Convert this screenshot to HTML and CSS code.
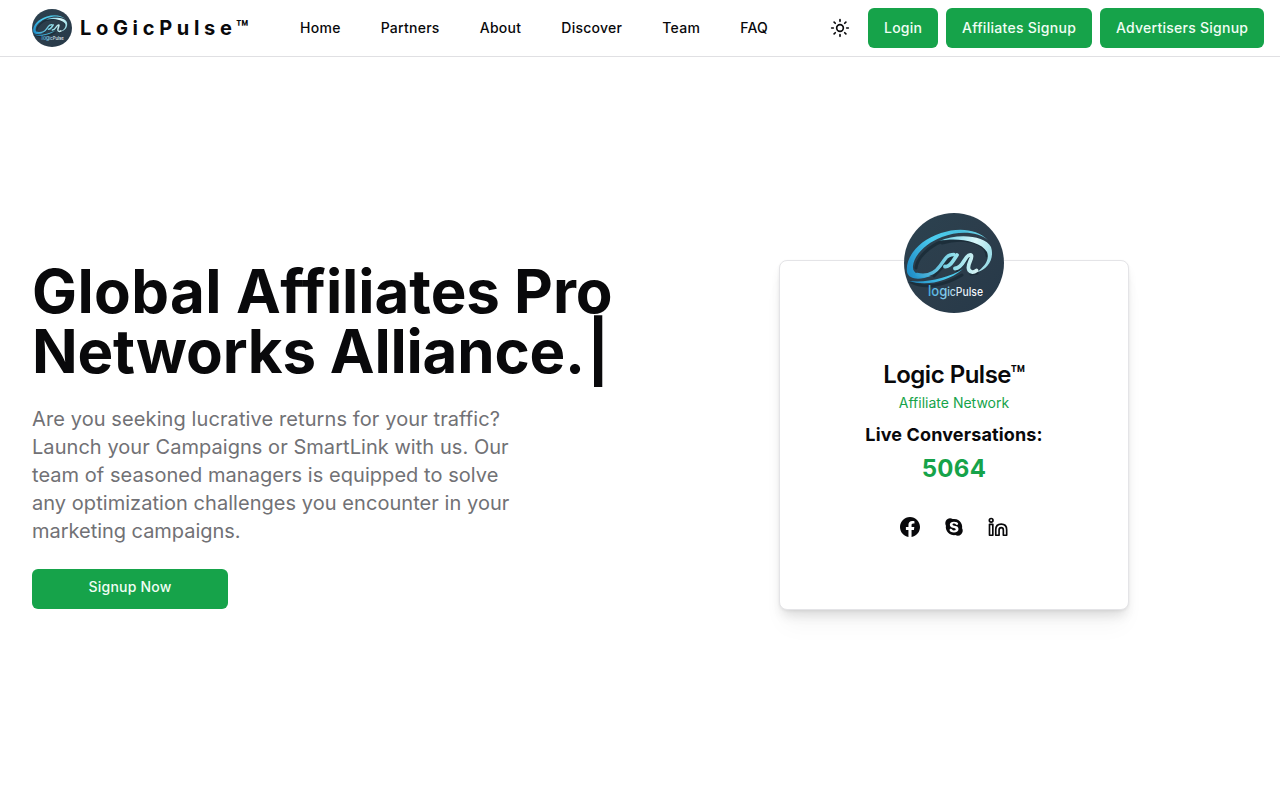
FILE: index.html
```html
<!DOCTYPE html>
<html lang="en">
<head>
<meta charset="utf-8">
<title>LoGicPulse</title>
<link rel="stylesheet" href="styles.css">
</head>
<body>
<svg class="defs" aria-hidden="true">
  <defs>
    <linearGradient id="disc" x1="0" y1="0" x2="1" y2="1"><stop offset="0" stop-color="#2b4250"/><stop offset=".5" stop-color="#2c3d4b"/><stop offset="1" stop-color="#263949"/></linearGradient>
    <linearGradient id="ring" gradientUnits="userSpaceOnUse" x1="5" y1="60" x2="85" y2="25"><stop offset="0" stop-color="#218fc8"/><stop offset=".4" stop-color="#4ccdf0"/><stop offset=".75" stop-color="#49bddc"/><stop offset="1" stop-color="#79dcec"/></linearGradient>
    <linearGradient id="arc" gradientUnits="userSpaceOnUse" x1="35" y1="30" x2="88" y2="55"><stop offset="0" stop-color="#69cfe7"/><stop offset=".55" stop-color="#d9f7fa"/><stop offset="1" stop-color="#8bd6e2"/></linearGradient>
    <linearGradient id="wave" gradientUnits="userSpaceOnUse" x1="12" y1="50" x2="72" y2="50"><stop offset="0" stop-color="#2d9ccf"/><stop offset=".6" stop-color="#8bddea"/><stop offset="1" stop-color="#d3f2f3"/></linearGradient>
    <linearGradient id="word" x1="0" x2="1"><stop offset="0" stop-color="#45aee0"/><stop offset=".36" stop-color="#8bd0ec"/><stop offset=".55" stop-color="#e4edf2"/><stop offset="1" stop-color="#fff"/></linearGradient>
  </defs>
  <symbol id="emblem" viewBox="0 0 100 100" preserveAspectRatio="none">
    <circle cx="50" cy="50" r="50" fill="url(#disc)"/>
    <g fill="none" stroke="#10212b" stroke-linecap="round" stroke-width="3" opacity=".55">
      <path d="M12 55C13 45 25 33 39 28M38 30C58 24 82 28 83 43M7 69C20 76 40 73 58 62M30 63L48 44M53 58L65 44M67 61L73 60"/>
    </g>
    <path fill="url(#ring)" d="M84 27C73 16 55 14 37 20C15 27 1 44 3 59C5 67 16 67 27 63C17 63 8 61 9 53C10 42 22 30 38 24C54 18 73 18 84 27Z"/>
    <path fill="url(#ring)" d="M5 68C21 73 42 70 59 56C44 65 23 70 5 68Z"/>
    <path fill="url(#arc)" d="M35 28C53 20 81 22 87 34C91 46 83 57 73 59C80 54 86 47 83 39C77 28 52 24 35 28Z"/>
    <g fill="none" stroke="url(#wave)" stroke-width="3.8" stroke-linecap="round" stroke-linejoin="round">
      <path stroke-width="3.4" d="M13 61.5C24 64 31 60 36 53L41 46Q44 41.5 50 41.5"/>
      <path d="M41 53.5Q45 54 49 48L53 42"/>
      <path d="M51 55.5Q56 55 60 48Q64 41 67 42C70 44 62 52 65 57Q68 61 72.5 57.5"/>
    </g>
    <text x="24" y="82.5" class="emblem-text" fill="url(#word)" textLength="55" lengthAdjust="spacingAndGlyphs"><tspan font-size="14.5">log</tspan><tspan font-size="11.5">icPulse</tspan></text>
  </symbol>
</svg>

<header class="topbar">
  <a class="brand"><svg class="brand-logo"><use href="#emblem"/></svg><span class="brand-name">LoGicPulse™</span></a>
  <nav class="nav"><a>Home</a><a>Partners</a><a>About</a><a>Discover</a><a>Team</a><a>FAQ</a></nav>
  <div class="actions">
    <svg class="sun" viewBox="0 0 24 24"><circle cx="12" cy="12" r="4"/><path d="M12 2v2M12 20v2M4.93 4.93l1.41 1.41M17.66 17.66l1.41 1.41M2 12h2M20 12h2M6.34 17.66l-1.41 1.41M19.07 4.93l-1.41 1.41"/></svg>
    <a class="btn login">Login</a><a class="btn affiliates">Affiliates Signup</a><a class="btn advertisers">Advertisers Signup</a>
  </div>
</header>

<main class="hero">
  <section class="intro">
    <h1><span class="line-one"><span class="first">Global</span> Affiliates Pro</span><br><span class="line-two">Networks Alliance.</span><span class="caret">|</span></h1>
    <p><span class="lead">Are you seeking lucrative returns for your traffic?</span><br>Launch your Campaigns or SmartLink with us. Our<br>team of seasoned managers is equipped to solve<br>any optimization challenges you encounter in your<br><span class="last">marketing campaigns.</span></p>
    <a class="btn signup">Signup Now</a>
  </section>
  <section class="showcase">
    <article class="card">
      <svg class="avatar"><use href="#emblem"/></svg>
      <h2>Logic Pulse™</h2>
      <div class="role">Affiliate Network</div>
      <div class="live">Live Conversations:</div>
      <div class="count">5064</div>
      <div class="social">
        <svg viewBox="0 0 24 24"><path d="M24 12.073C24 5.405 18.627 0 12 0S0 5.405 0 12.073C0 18.1 4.388 23.094 10.125 24v-8.437H7.078v-3.49h3.047v-2.66c0-3.025 1.792-4.697 4.533-4.697 1.312 0 2.686.236 2.686.236v2.971H15.83c-1.491 0-1.956.93-1.956 1.886v2.264h3.328l-.532 3.49h-2.796V24C19.612 23.094 24 18.1 24 12.073z"/></svg>
        <svg viewBox="0 0 24 24"><path fill-rule="evenodd" d="M7.2 1.5A6 6 0 0 1 10.4 2.4A9.8 9.8 0 0 1 21.7 13.6A6 6 0 0 1 13.6 21.7A9.8 9.8 0 0 1 2.3 10.4A6 6 0 0 1 7.2 1.5ZM12 5.6C9 5.6 7 7 7 9.3C7 14 14.1 12.4 14.1 14.8C14.1 15.8 13.2 16.2 12 16.2C9.7 16.2 9.7 14.2 8.1 14.2C7.2 14.2 6.7 14.9 6.7 15.6C6.7 17.1 8.8 18.5 12 18.5C15.3 18.5 17.4 16.9 17.4 14.3C17.4 9.6 10.2 11.1 10.2 9C10.2 8.2 11 7.8 12.1 7.8C14.1 7.8 14.2 9.5 15.6 9.5C16.5 9.5 17 8.9 17 8.1C17 6.7 14.7 5.6 12 5.6Z"/></svg>
        <svg viewBox="0 0 24 24" class="outlined"><circle cx="3.8" cy="4" r="2.2"/><path d="M1.8 8.8H5.8V21.9H1.8ZM9.3 21.9V15.3C9.3 11 12 8.6 15.8 8.6S22.4 11 22.4 15.3V21.9H18.4V15.5C18.4 13.6 17.4 12.7 15.8 12.7S13.3 13.6 13.3 15.5V21.9Z"/></svg>
      </div>
    </article>
  </section>
</main>
</body>
</html>
```
FILE: styles.css
```css
* { box-sizing: border-box; }
body {
  margin: 0;
  height: 800px;
  overflow: hidden;
  background: #fff;
  color: #09090b;
  font-family: Inter, "Liberation Sans", sans-serif;
}
.defs { position: absolute; width: 0; height: 0; }
.topbar {
  display: flex;
  align-items: center;
  height: 57px;
  padding: 0 16px 0 32px;
  border-bottom: 1px solid #e0e0e3;
}
.brand { display: flex; align-items: center; gap: 8px; width: 252px; }
.brand-logo { width: 40px; height: 38px; }
.brand-name { font-size: 20px; font-weight: 700; line-height: 28px; letter-spacing: 4.68px; white-space: nowrap; }
.nav { display: flex; gap: 40px; padding-left: 16px; font-size: 14px; font-weight: 500; line-height: 20px; letter-spacing: .27px; }
.actions { display: flex; align-items: center; gap: 8px; margin-left: auto; }
.sun { width: 20px; height: 20px; margin-right: 10px; fill: none; stroke: currentColor; stroke-width: 2; stroke-linecap: round; }
.btn {
  height: 40px;
  padding: 10px 16px;
  border-radius: 6px;
  background: #16a34a;
  color: #f0fdf4;
  font-size: 14px;
  font-weight: 500;
  line-height: 20px;
  letter-spacing: .25px;
  white-space: nowrap;
}
.login { width: 70px; }
.affiliates { width: 146px; letter-spacing: .28px; }
.advertisers { width: 164px; }
.hero { display: grid; grid-template-columns: 596px 1fr; padding-left: 32px; }
.intro { padding-top: 204px; }
h1 { margin: 0; font-size: 60px; font-weight: 700; line-height: 60px; white-space: nowrap; }
.line-one { letter-spacing: -.05px; }
.first { letter-spacing: .38px; }
.line-two { letter-spacing: -.2px; }
.caret { margin-left: 2px; }
.intro p { margin: 24px 0; color: #717175; font-size: 20px; line-height: 28px; letter-spacing: .05px; white-space: nowrap; }
.lead { letter-spacing: .1px; }
.last { letter-spacing: -.03px; }
.signup { display: block; width: 196px; padding: 8px 16px; text-align: center; letter-spacing: .2px; }
.showcase { display: flex; justify-content: center; align-items: flex-start; padding-top: 203px; }
.card {
  display: flex;
  flex-direction: column;
  align-items: center;
  width: 350px;
  height: 350px;
  border: 1px solid #e4e4e7;
  border-radius: 8px;
  background: #fff;
  box-shadow: 0 20px 25px -5px rgba(0,0,0,.04), 0 8px 12px -3px rgba(0,0,0,.12), 0 1px 3px rgba(0,0,0,.06);
}
.avatar { width: 100px; height: 100px; margin-top: -48px; flex: none; }
.emblem-text { font-family: Inter, sans-serif; font-weight: 500; }
h2 { margin: 46px 0 0; font-size: 24px; font-weight: 600; line-height: 32px; letter-spacing: -.5px; }
.role { color: #16a34a; font-size: 14px; line-height: 20px; margin-top: 2px; }
.live { font-size: 18px; font-weight: 700; line-height: 28px; letter-spacing: .14px; margin-top: 8px; }
.count { color: #16a34a; font-size: 24px; font-weight: 700; line-height: 32px; letter-spacing: .3px; margin-top: 4px; }
.social { display: flex; gap: 24px; margin-top: 32px; }
.social svg { width: 20px; height: 20px; fill: currentColor; overflow: visible; }
.social .outlined { fill: none; stroke: currentColor; stroke-width: 2; stroke-linejoin: round; }
```
